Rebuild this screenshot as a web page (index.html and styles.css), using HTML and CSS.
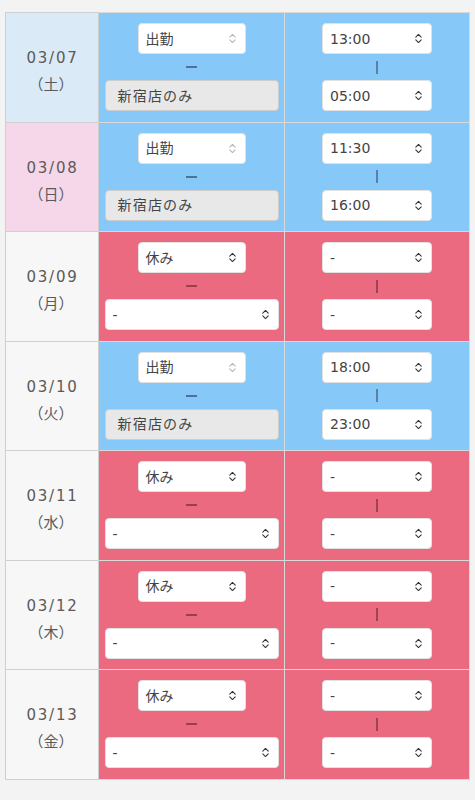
FILE: index.html
```html
<!DOCTYPE html>
<html lang="ja">
<head>
<meta charset="utf-8">
<title>シフト</title>
<link rel="stylesheet" href="styles.css">
</head>
<body>
<div class="page">
<table class="schedule">
<colgroup><col class="c-date"><col class="c-mid"><col class="c-time"></colgroup>
<tbody>
<tr>
  <td class="date date-sat"><div class="md">03/07</div><div class="dow">（土）</div></td>
  <td class="cell blue"><div class="stack">
    <div class="sel sel-status"><span>出勤</span><svg class="chev light" viewBox="0 0 10 12"><path d="M2 4.5 L5 1.5 L8 4.5 M2 7.5 L5 10.5 L8 7.5"/></svg></div>
    <div class="sep"><span class="dash"></span></div>
    <div class="sel sel-wide disabled"><span>新宿店のみ</span></div>
  </div></td>
  <td class="cell blue"><div class="stack">
    <div class="sel sel-time"><span>13:00</span><svg class="chev" viewBox="0 0 10 12"><path d="M2 4.5 L5 1.5 L8 4.5 M2 7.5 L5 10.5 L8 7.5"/></svg></div>
    <div class="sep"><span class="vbar"></span></div>
    <div class="sel sel-time"><span>05:00</span><svg class="chev" viewBox="0 0 10 12"><path d="M2 4.5 L5 1.5 L8 4.5 M2 7.5 L5 10.5 L8 7.5"/></svg></div>
  </div></td>
</tr>
<tr>
  <td class="date date-sun"><div class="md">03/08</div><div class="dow">（日）</div></td>
  <td class="cell blue"><div class="stack">
    <div class="sel sel-status"><span>出勤</span><svg class="chev light" viewBox="0 0 10 12"><path d="M2 4.5 L5 1.5 L8 4.5 M2 7.5 L5 10.5 L8 7.5"/></svg></div>
    <div class="sep"><span class="dash"></span></div>
    <div class="sel sel-wide disabled"><span>新宿店のみ</span></div>
  </div></td>
  <td class="cell blue"><div class="stack">
    <div class="sel sel-time"><span>11:30</span><svg class="chev" viewBox="0 0 10 12"><path d="M2 4.5 L5 1.5 L8 4.5 M2 7.5 L5 10.5 L8 7.5"/></svg></div>
    <div class="sep"><span class="vbar"></span></div>
    <div class="sel sel-time"><span>16:00</span><svg class="chev" viewBox="0 0 10 12"><path d="M2 4.5 L5 1.5 L8 4.5 M2 7.5 L5 10.5 L8 7.5"/></svg></div>
  </div></td>
</tr>
<tr>
  <td class="date"><div class="md">03/09</div><div class="dow">（月）</div></td>
  <td class="cell pink"><div class="stack">
    <div class="sel sel-status"><span>休み</span><svg class="chev" viewBox="0 0 10 12"><path d="M2 4.5 L5 1.5 L8 4.5 M2 7.5 L5 10.5 L8 7.5"/></svg></div>
    <div class="sep"><span class="dash"></span></div>
    <div class="sel sel-wide"><span>-</span><svg class="chev" viewBox="0 0 10 12"><path d="M2 4.5 L5 1.5 L8 4.5 M2 7.5 L5 10.5 L8 7.5"/></svg></div>
  </div></td>
  <td class="cell pink"><div class="stack">
    <div class="sel sel-time"><span>-</span><svg class="chev" viewBox="0 0 10 12"><path d="M2 4.5 L5 1.5 L8 4.5 M2 7.5 L5 10.5 L8 7.5"/></svg></div>
    <div class="sep"><span class="vbar"></span></div>
    <div class="sel sel-time"><span>-</span><svg class="chev" viewBox="0 0 10 12"><path d="M2 4.5 L5 1.5 L8 4.5 M2 7.5 L5 10.5 L8 7.5"/></svg></div>
  </div></td>
</tr>
<tr>
  <td class="date"><div class="md">03/10</div><div class="dow">（火）</div></td>
  <td class="cell blue"><div class="stack">
    <div class="sel sel-status"><span>出勤</span><svg class="chev light" viewBox="0 0 10 12"><path d="M2 4.5 L5 1.5 L8 4.5 M2 7.5 L5 10.5 L8 7.5"/></svg></div>
    <div class="sep"><span class="dash"></span></div>
    <div class="sel sel-wide disabled"><span>新宿店のみ</span></div>
  </div></td>
  <td class="cell blue"><div class="stack">
    <div class="sel sel-time"><span>18:00</span><svg class="chev" viewBox="0 0 10 12"><path d="M2 4.5 L5 1.5 L8 4.5 M2 7.5 L5 10.5 L8 7.5"/></svg></div>
    <div class="sep"><span class="vbar"></span></div>
    <div class="sel sel-time"><span>23:00</span><svg class="chev" viewBox="0 0 10 12"><path d="M2 4.5 L5 1.5 L8 4.5 M2 7.5 L5 10.5 L8 7.5"/></svg></div>
  </div></td>
</tr>
<tr>
  <td class="date"><div class="md">03/11</div><div class="dow">（水）</div></td>
  <td class="cell pink"><div class="stack">
    <div class="sel sel-status"><span>休み</span><svg class="chev" viewBox="0 0 10 12"><path d="M2 4.5 L5 1.5 L8 4.5 M2 7.5 L5 10.5 L8 7.5"/></svg></div>
    <div class="sep"><span class="dash"></span></div>
    <div class="sel sel-wide"><span>-</span><svg class="chev" viewBox="0 0 10 12"><path d="M2 4.5 L5 1.5 L8 4.5 M2 7.5 L5 10.5 L8 7.5"/></svg></div>
  </div></td>
  <td class="cell pink"><div class="stack">
    <div class="sel sel-time"><span>-</span><svg class="chev" viewBox="0 0 10 12"><path d="M2 4.5 L5 1.5 L8 4.5 M2 7.5 L5 10.5 L8 7.5"/></svg></div>
    <div class="sep"><span class="vbar"></span></div>
    <div class="sel sel-time"><span>-</span><svg class="chev" viewBox="0 0 10 12"><path d="M2 4.5 L5 1.5 L8 4.5 M2 7.5 L5 10.5 L8 7.5"/></svg></div>
  </div></td>
</tr>
<tr>
  <td class="date"><div class="md">03/12</div><div class="dow">（木）</div></td>
  <td class="cell pink"><div class="stack">
    <div class="sel sel-status"><span>休み</span><svg class="chev" viewBox="0 0 10 12"><path d="M2 4.5 L5 1.5 L8 4.5 M2 7.5 L5 10.5 L8 7.5"/></svg></div>
    <div class="sep"><span class="dash"></span></div>
    <div class="sel sel-wide"><span>-</span><svg class="chev" viewBox="0 0 10 12"><path d="M2 4.5 L5 1.5 L8 4.5 M2 7.5 L5 10.5 L8 7.5"/></svg></div>
  </div></td>
  <td class="cell pink"><div class="stack">
    <div class="sel sel-time"><span>-</span><svg class="chev" viewBox="0 0 10 12"><path d="M2 4.5 L5 1.5 L8 4.5 M2 7.5 L5 10.5 L8 7.5"/></svg></div>
    <div class="sep"><span class="vbar"></span></div>
    <div class="sel sel-time"><span>-</span><svg class="chev" viewBox="0 0 10 12"><path d="M2 4.5 L5 1.5 L8 4.5 M2 7.5 L5 10.5 L8 7.5"/></svg></div>
  </div></td>
</tr>
<tr>
  <td class="date"><div class="md">03/13</div><div class="dow">（金）</div></td>
  <td class="cell pink"><div class="stack">
    <div class="sel sel-status"><span>休み</span><svg class="chev" viewBox="0 0 10 12"><path d="M2 4.5 L5 1.5 L8 4.5 M2 7.5 L5 10.5 L8 7.5"/></svg></div>
    <div class="sep"><span class="dash"></span></div>
    <div class="sel sel-wide"><span>-</span><svg class="chev" viewBox="0 0 10 12"><path d="M2 4.5 L5 1.5 L8 4.5 M2 7.5 L5 10.5 L8 7.5"/></svg></div>
  </div></td>
  <td class="cell pink"><div class="stack">
    <div class="sel sel-time"><span>-</span><svg class="chev" viewBox="0 0 10 12"><path d="M2 4.5 L5 1.5 L8 4.5 M2 7.5 L5 10.5 L8 7.5"/></svg></div>
    <div class="sep"><span class="vbar"></span></div>
    <div class="sel sel-time"><span>-</span><svg class="chev" viewBox="0 0 10 12"><path d="M2 4.5 L5 1.5 L8 4.5 M2 7.5 L5 10.5 L8 7.5"/></svg></div>
  </div></td>
</tr>
</tbody>
</table>
</div>
</body>
</html>
```

FILE: styles.css
```css
html, body {
  margin: 0;
  padding: 0;
  background: #f3f3f3;
}

body {
  font-family: "DejaVu Sans", "Noto Sans CJK JP", sans-serif;
  color: #333;
}

.page {
  padding: 12px 6px 20px 5px;
}

.schedule {
  border-collapse: collapse;
  table-layout: fixed;
  width: 464px;
}

.c-date { width: 93px; }
.c-mid { width: 186px; }
.c-time { width: 185px; }

.schedule td {
  border: 1px solid #cfcfcf;
  padding: 10px 6px 10.5px;
  vertical-align: middle;
}

.schedule td.date {
  background: #f7f7f7;
  text-align: center;
  color: #5a5a5a;
  padding-top: 14px;
  padding-bottom: 6.5px;
}

.schedule td.date-sat { background: #dbeaf7; }
.schedule td.date-sun { background: #f6d7e9; }

.md {
  font-size: 15px;
  letter-spacing: 1.8px;
  line-height: 25px;
  padding-left: 1px;
}

.dow {
  font-family: "Noto Sans CJK JP", sans-serif;
  font-size: 15px;
  line-height: 25px;
  margin-left: -2px;
}

.schedule td.cell {
  border-color: #d9d9d9;
}

.blue { background: #86c8f8; }
.pink { background: #ec6a80; }

.stack {
  display: flex;
  flex-direction: column;
  align-items: center;
  height: 88px;
}

.sel {
  box-sizing: border-box;
  height: 31px;
  background: #fff;
  border: 1px solid #e2e2e2;
  border-radius: 4px;
  display: flex;
  align-items: center;
  justify-content: space-between;
  padding: 0 8px 0 7px;
  font-size: 14px;
  color: #444;
  white-space: nowrap;
}

.sel span {
  line-height: 1;
}

.sel-status { width: 108px; }
.sel-wide { width: 174px; }
.sel-time { width: 110px; }

.sel.disabled {
  background: #e8e8e8;
  border-color: #cdcdcd;
  padding-left: 12px;
  color: #444;
  letter-spacing: 1.2px;
}

.chev {
  width: 9px;
  height: 11px;
  flex: none;
  fill: none;
  stroke: #333;
  stroke-width: 1.2;
  stroke-linecap: round;
  stroke-linejoin: round;
}

.chev.light {
  stroke: #b5b5b5;
}

.sep {
  height: 26px;
  display: flex;
  align-items: center;
  justify-content: center;
}

.dash {
  width: 11px;
  height: 2px;
  background: rgba(25, 45, 75, 0.55);
}

.vbar {
  width: 1.5px;
  height: 13px;
  background: rgba(25, 45, 75, 0.45);
}

.pink .dash { background: rgba(70, 20, 30, 0.5); }
.pink .vbar { background: rgba(70, 20, 30, 0.45); }
```
